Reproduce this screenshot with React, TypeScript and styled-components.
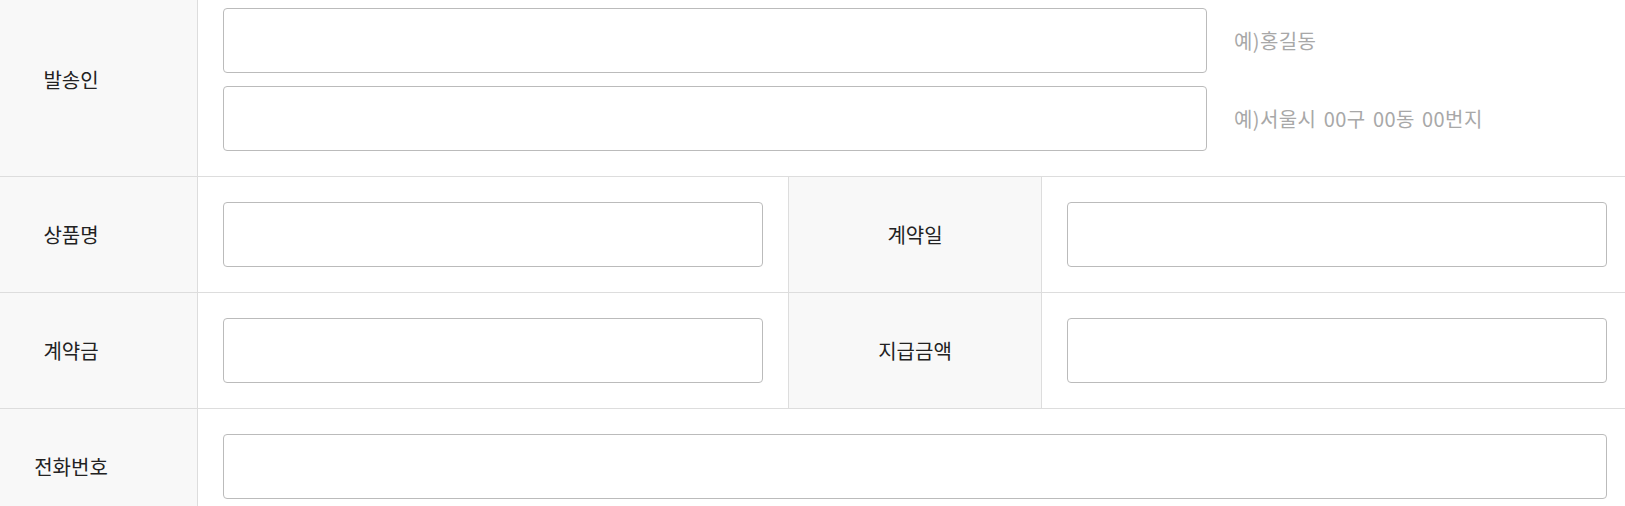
import React from "react";
import styled, { createGlobalStyle } from "styled-components";

const GlobalStyle = createGlobalStyle`
  html, body {
    margin: 0;
    padding: 0;
    overflow: hidden;
    background: #fff;
  }
  body {
    font-family: "Noto Sans CJK KR", "Noto Sans", sans-serif;
    color: #222;
  }
`;

// 스크린샷이 위쪽 / 왼쪽이 잘려서 찍힌 상태라 음수 마진으로 맞춤
const FormTable = styled.div`
  width: 1687px;
  margin: -17px 0 0 -55px;
`;

const Row = styled.div<{ $split?: boolean }>`
  display: grid;
  grid-template-columns: ${(p) =>
    p.$split ? "253px 590px 254px 590px" : "253px 1fr"};
  border-bottom: 1px solid #ddd;
`;

const Label = styled.div<{ $middle?: boolean }>`
  display: flex;
  align-items: center;
  justify-content: center;
  background: #f8f8f8;
  border-right: 1px solid #ddd;
  border-left: ${(p) => (p.$middle ? "1px solid #ddd" : "none")};
  font-size: 20px;
  color: #222;
`;

const Cell = styled.div`
  display: flex;
  flex-direction: column;
  gap: 13px;
  padding: 25px;
`;

const Line = styled.div`
  display: flex;
  align-items: center;
  gap: 27px;
`;

const Input = styled.input<{ $w?: number }>`
  box-sizing: border-box;
  width: ${(p) => (p.$w ? `${p.$w}px` : "100%")};
  height: 65px;
  border: 1px solid #bbb;
  border-radius: 4px;
  background: #fff;
  padding: 0 14px;
  font-size: 16px;
  font-family: inherit;
  outline: none;
`;

const Hint = styled.span`
  font-size: 20px;
  color: #a8a8a8;
  white-space: nowrap;
  letter-spacing: 0.4px;
  word-spacing: 2.5px;
`;

export default function App() {
  return (
    <>
      <GlobalStyle />
      <FormTable>
        <Row>
          <Label>발송인</Label>
          <Cell>
            <Line>
              <Input $w={984} />
              <Hint>예)홍길동</Hint>
            </Line>
            <Line>
              <Input $w={984} />
              <Hint>예)서울시 00구 00동 00번지</Hint>
            </Line>
          </Cell>
        </Row>
        <Row $split>
          <Label>상품명</Label>
          <Cell>
            <Input />
          </Cell>
          <Label $middle>계약일</Label>
          <Cell>
            <Input />
          </Cell>
        </Row>
        <Row $split>
          <Label>계약금</Label>
          <Cell>
            <Input />
          </Cell>
          <Label $middle>지급금액</Label>
          <Cell>
            <Input />
          </Cell>
        </Row>
        <Row>
          <Label>전화번호</Label>
          <Cell>
            <Input />
          </Cell>
        </Row>
      </FormTable>
    </>
  );
}
